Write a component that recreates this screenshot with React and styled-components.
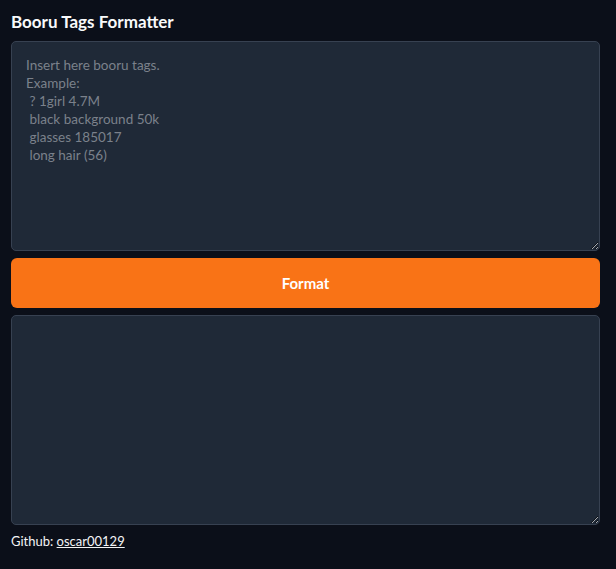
import React, { useState } from 'react';
import styled, { createGlobalStyle } from 'styled-components';

const GlobalStyle = createGlobalStyle`
  html, body {
    margin: 0;
    padding: 0;
    background: #0b0f19;
  }
  body {
    font-family: Lato, "Noto Sans", sans-serif;
    color: #f3f4f6;
  }
`;

const Page = styled.div`
  width: 616px;
  height: 569px;
  box-sizing: border-box;
  padding: 12px 16px 0 11px;
  display: flex;
  flex-direction: column;
`;

const Title = styled.h1`
  margin: 0 0 9px;
  font-size: 17px;
  font-weight: 700;
  line-height: 20px;
  color: #f9fafb;
`;

const TagArea = styled.textarea`
  display: block;
  box-sizing: border-box;
  width: 100%;
  height: 210px;
  padding: 14px 14px 12px;
  background: #1f2937;
  border: 1px solid #374151;
  border-radius: 5px;
  color: #e5e7eb;
  font-family: Lato, "Noto Sans", sans-serif;
  font-size: 13.5px;
  line-height: 18px;
  resize: vertical;
  outline: none;

  &::placeholder {
    color: #7b818b;
  }
`;

const FormatButton = styled.button`
  display: block;
  margin: 7px 0 7px;
  height: 50px;
  width: 100%;
  border: none;
  border-radius: 6px;
  background: #f97316;
  color: #ffffff;
  font-family: Lato, "Noto Sans", sans-serif;
  font-size: 15px;
  font-weight: 700;
  cursor: pointer;
`;

const Footer = styled.div`
  margin-top: 8px;
  font-size: 13px;
  color: #f3f4f6;

  a {
    color: #f3f4f6;
    text-decoration: underline;
  }
`;

const placeholder = `Insert here booru tags.
Example:
 ? 1girl 4.7M
 black background 50k
 glasses 185017
 long hair (56)`;

function App() {
  const [tags, setTags] = useState('');
  const [output, setOutput] = useState('');

  // strips counts and question marks, joins tags by comma
  const formatTags = () => {
    const result = tags
      .split('\n')
      .map((line) => line.replace(/^\s*\?\s*/, '').replace(/\s+(\(\d+\)|[\d.]+[kKmM]?)\s*$/, '').trim())
      .filter((line) => line.length > 0)
      .join(', ');
    setOutput(result);
  };

  return (
    <Page>
      <GlobalStyle />
      <Title>Booru Tags Formatter</Title>
      <TagArea
        placeholder={placeholder}
        value={tags}
        onChange={(evt) => setTags(evt.target.value)}
      />
      <FormatButton onClick={formatTags}>Format</FormatButton>
      <TagArea value={output} readOnly />
      <Footer>
        Github:
        {' '}
        <a href="#github">oscar00129</a>
      </Footer>
    </Page>
  );
}

export default App;
